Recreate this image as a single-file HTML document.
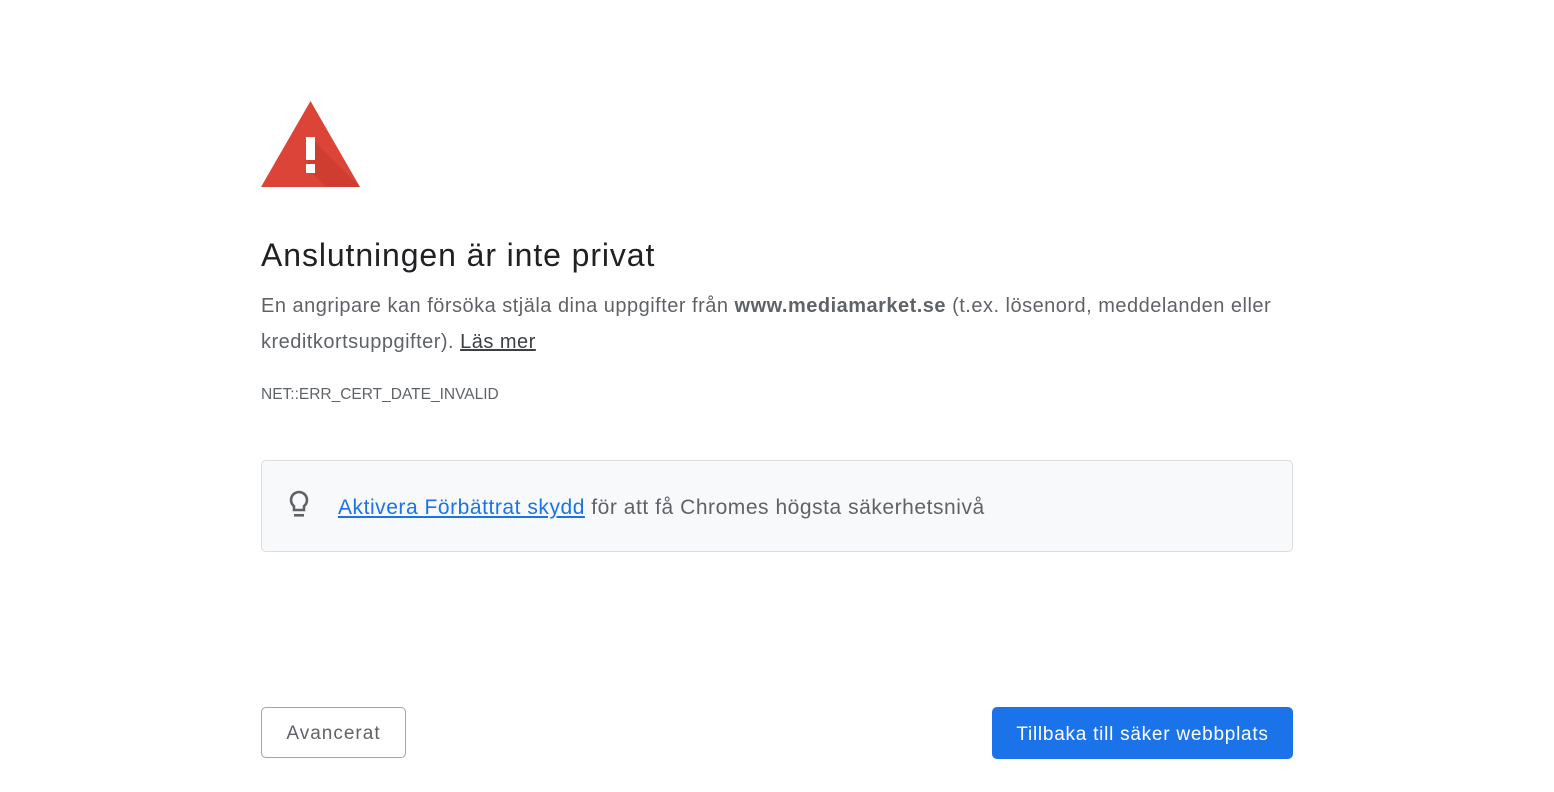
<!DOCTYPE html>
<html><head><meta charset="utf-8"><style>
body{margin:0;background:#fff;font-family:"Liberation Sans",sans-serif;width:1554px;height:792px;position:relative;overflow:hidden;color:#5f6368}
.abs{position:absolute}
h1{position:absolute;left:261px;top:237px;margin:0;font-weight:normal;font-size:32px;color:#202124;letter-spacing:0.9px}
.p{left:261px;top:288px;font-size:20px;line-height:36px;width:1080px;color:#5f6368;letter-spacing:0.49px}
.p b{color:#5f6368}
.p u{color:#3c4043}
.code{left:261px;top:386px;font-size:15.5px;color:#5f6368}
.box{left:261px;top:460px;width:1030px;height:90px;border:1px solid #dadce0;border-radius:5px;background:#f8f9fa}
.box .t{position:absolute;left:76px;top:35px;font-size:21px;color:#5f6368;letter-spacing:0.54px}
.box a{color:#1a73e8;text-decoration:underline}
.btn1{left:261px;top:707px;width:143px;height:49px;border:1px solid #a0a4a8;border-radius:5px;font-size:19px;color:#5f6368;text-align:center;line-height:52px;letter-spacing:1px}
.btn2{left:992px;top:707px;width:301px;height:52px;background:#1a73e8;border-radius:5px;font-size:19px;color:#fff;text-align:center;line-height:56px;letter-spacing:0.75px}
</style></head><body>
<svg class="abs" style="left:261px;top:101px" width="99" height="86" viewBox="0 0 99 86">
<polygon points="49.5,0 99,86 0,86" fill="#db4437"/>
<polygon points="54,41 99,86 65,86 45,66" fill="#c53929" opacity="0.6"/>
<rect x="45" y="36" width="9" height="23" fill="#fff"/>
<rect x="45" y="63" width="9" height="9" fill="#fff"/>
</svg>
<h1>Anslutningen är inte privat</h1>
<div class="abs p">En angripare kan försöka stjäla dina uppgifter från <b>www.mediamarket.se</b> (t.ex. lösenord, meddelanden eller kreditkortsuppgifter). <u>Läs mer</u></div>
<div class="abs code">NET::ERR_CERT_DATE_INVALID</div>
<div class="abs box">
<svg class="abs" style="left:25px;top:28px" width="24" height="32" viewBox="0 0 24 32">
<path d="M12 3a8 8 0 0 0-5 14.2V21h10v-3.8A8 8 0 0 0 12 3z" fill="none" stroke="#5f6368" stroke-width="2.6"/>
<rect x="7" y="25" width="10" height="2.6" fill="#5f6368"/>
</svg>
<div class="t"><a>Aktivera Förbättrat skydd</a> för att få Chromes högsta säkerhetsnivå</div>
</div>
<div class="abs btn1">Avancerat</div>
<div class="abs btn2">Tillbaka till säker webbplats</div>
</body></html>
